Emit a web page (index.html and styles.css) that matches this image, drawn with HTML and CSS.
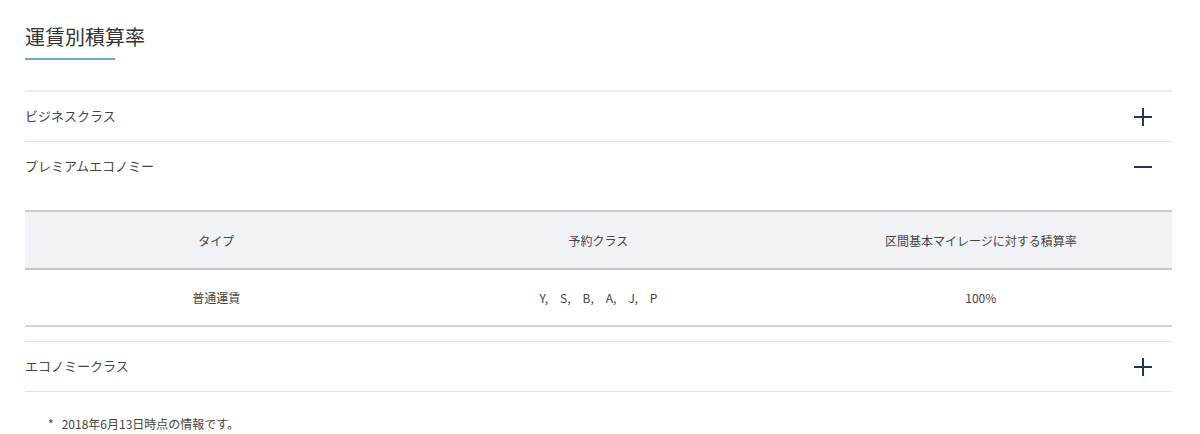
FILE: index.html
```html
<!DOCTYPE html>
<html lang="ja">
<head>
<meta charset="utf-8">
<title>運賃別積算率</title>
<link rel="stylesheet" href="styles.css">
</head>
<body>
<div class="page">
  <h2 class="title">運賃別積算率</h2>
  <div class="title-bar"></div>
  <div class="accordion">
    <div class="acc-item first">
      <div class="acc-head"><span>ビジネスクラス</span>
        <svg class="icon" width="18" height="18" viewBox="0 0 18 18"><path d="M0 9H18M9 0V18" stroke="#22365a" stroke-width="2" fill="none"/></svg>
      </div>
    </div>
    <div class="acc-item">
      <div class="acc-head"><span>プレミアムエコノミー</span>
        <svg class="icon" width="18" height="18" viewBox="0 0 18 18"><path d="M0 9H18" stroke="#22365a" stroke-width="2" fill="none"/></svg>
      </div>
      <div class="acc-body">
        <table class="rates">
          <thead>
            <tr><th>タイプ</th><th>予約クラス</th><th>区間基本マイレージに対する積算率</th></tr>
          </thead>
          <tbody>
            <tr><td>普通運賃</td><td>Y,　S,　B,　A,　J,　P</td><td>100%</td></tr>
          </tbody>
        </table>
      </div>
    </div>
    <div class="acc-item last">
      <div class="acc-head"><span>エコノミークラス</span>
        <svg class="icon" width="18" height="18" viewBox="0 0 18 18"><path d="M0 9H18M9 0V18" stroke="#22365a" stroke-width="2" fill="none"/></svg>
      </div>
    </div>
  </div>
  <p class="note">*&nbsp;&nbsp;&nbsp;2018年6月13日時点の情報です。</p>
</div>
</body>
</html>
```

FILE: styles.css
```css
html, body {
  margin: 0;
  padding: 0;
  background: #fff;
}
body {
  font-family: "Noto Sans CJK JP", "Noto Sans", sans-serif;
  color: #333;
}
.page {
  margin: 0 28px 0 25px;
  padding-top: 22px;
}
.title {
  margin: 0;
  font-size: 20px;
  font-weight: 400;
  line-height: 30px;
  color: #333;
}
.title-bar {
  width: 90px;
  height: 2px;
  margin-top: 6px;
  background: #6aabc2;
}
.accordion {
  margin-top: 30px;
}
.acc-item {
  border-top: 1px solid #e4e4e4;
}
.acc-item.first {
  border-top: 2px solid #ebebeb;
}
.acc-item.last {
  border-bottom: 1px solid #e4e4e4;
}
.acc-head {
  height: 46px;
  padding-bottom: 3px;
  display: flex;
  align-items: center;
  justify-content: space-between;
  padding-right: 20px;
  font-size: 13px;
  color: #444;
}
.icon {
  display: block;
  margin-top: 3px;
}
.acc-body {
  padding-top: 19px;
  padding-bottom: 14px;
}
.rates {
  width: 100%;
  border-collapse: collapse;
  table-layout: fixed;
  font-size: 12px;
  color: #444;
}
.rates th {
  font-weight: 400;
  height: 56px;
  padding: 0;
  background: #f1f2f6;
  border-top: 2px solid #cdcdcd;
  border-bottom: 2px solid #c6c6c6;
  text-align: center;
}
.rates td {
  height: 55px;
  padding: 0;
  text-align: center;
  border-bottom: 2px solid #d4d4d4;
}
.note {
  margin: 22px 0 0 23px;
  font-size: 12px;
  line-height: 20px;
  color: #444;
}
```
